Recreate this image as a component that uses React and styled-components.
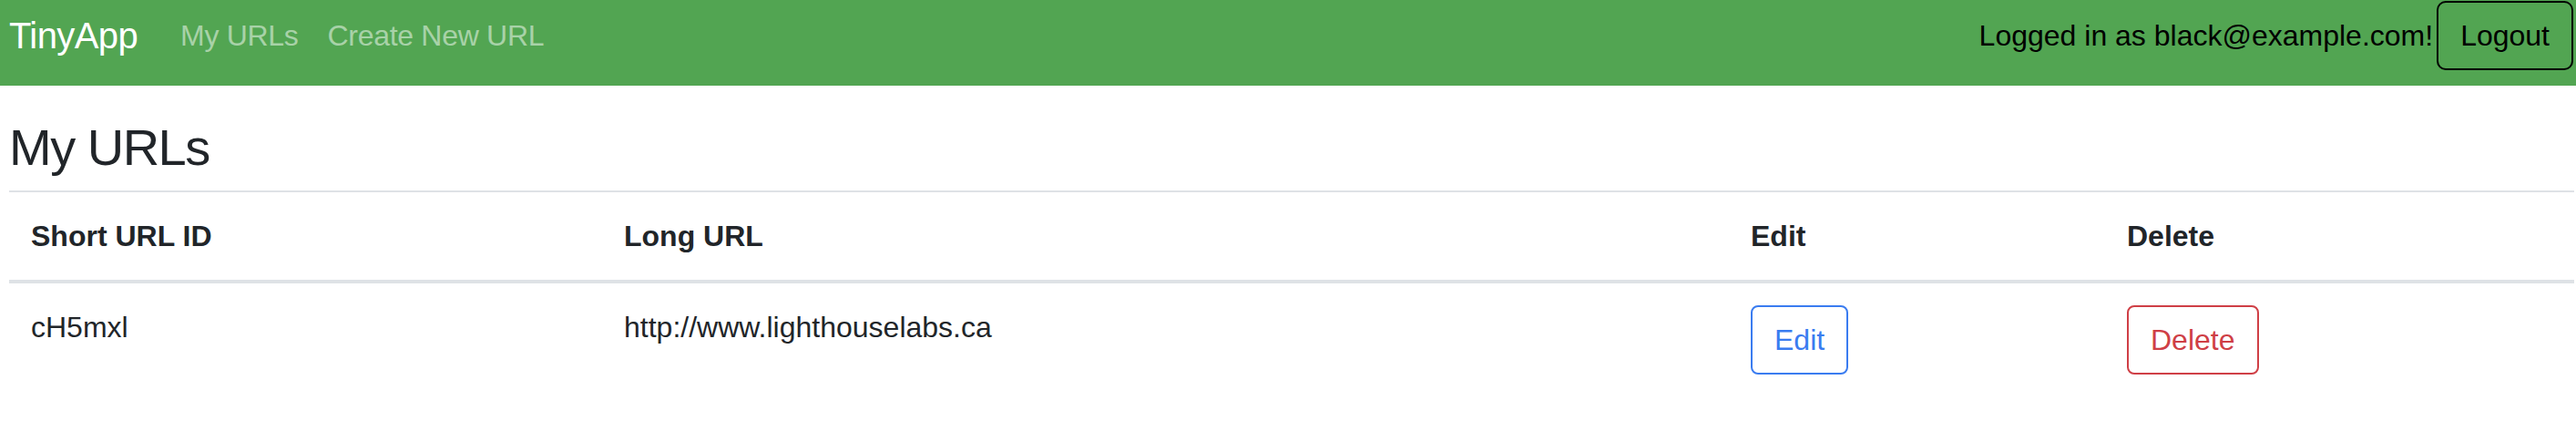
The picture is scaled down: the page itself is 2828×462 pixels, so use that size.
import React from "react"
import styled, { createGlobalStyle } from "styled-components"

const GlobalStyle = createGlobalStyle`
  html, body {
    margin: 0;
    padding: 0;
    background: #fff;
  }
  body {
    font-family: "Liberation Sans", Arial, sans-serif;
    font-size: 32px;
    line-height: 1.5;
    color: #212529;
  }
  * { box-sizing: border-box; }
`

const Navbar = styled.nav`
  display: flex;
  align-items: flex-start;
  height: 94px;
  padding: 0 3px 0 10px;
  background-color: #52a552;
`

const Brand = styled.a`
  margin-top: 9px;
  margin-right: 31px;
  font-size: 40px;
  line-height: 60px;
  letter-spacing: -0.6px;
  color: #fff;
  text-decoration: none;
  white-space: nowrap;
`

const NavLink = styled.a`
  margin-top: 15px;
  padding: 0 16px;
  font-size: 32px;
  line-height: 48px;
  letter-spacing: -0.3px;
  color: rgba(255, 255, 255, 0.5);
  text-decoration: none;
  white-space: nowrap;
`

const UserArea = styled.div`
  display: flex;
  align-items: flex-start;
  margin-left: auto;
`

const LoggedIn = styled.span`
  margin-top: 15px;
  margin-right: 4px;
  line-height: 48px;
  color: #000;
  white-space: nowrap;
`

const OutlineButton = styled.button`
  display: inline-block;
  padding: 12px 24px;
  font-family: inherit;
  font-size: 32px;
  line-height: 48px;
  color: ${(p) => p.$color};
  background: transparent;
  border: 2px solid ${(p) => p.$color};
  border-radius: ${(p) => (p.$round ? "10px" : "8px")};
  cursor: pointer;
`

const LogoutButton = styled(OutlineButton)`
  margin-top: 1px;
`

const Main = styled.main`
  padding: 34px 2px 0 10px;
`

const Title = styled.h3`
  margin: 0 0 14px;
  font-size: 56px;
  font-weight: 500;
  line-height: 1.2;
  letter-spacing: -1.5px;
  color: #212529;
`

const Table = styled.table`
  width: 100%;
  border-collapse: collapse;
  table-layout: fixed;
  color: #212529;
`

const HeadCell = styled.th`
  width: ${(p) => p.$width}px;
  padding: 24px;
  text-align: left;
  vertical-align: bottom;
  font-weight: 700;
  line-height: 48px;
  border-top: 2px solid #dee2e6;
  border-bottom: 4px solid #dee2e6;
`

const Cell = styled.td`
  padding: 24px;
  vertical-align: top;
  line-height: 48px;
`

const urls = [{ id: "cH5mxl", longURL: "http://www.lighthouselabs.ca" }]

const columns = [
  { label: "Short URL ID", width: 651 },
  { label: "Long URL", width: 1237 },
  { label: "Edit", width: 413 },
  { label: "Delete", width: 515 },
]

export default function App() {
  return (
    <>
      <GlobalStyle />
      <Navbar>
        <Brand href="#">TinyApp</Brand>
        <NavLink href="#">My URLs</NavLink>
        <NavLink href="#">Create New URL</NavLink>
        <UserArea>
          <LoggedIn>Logged in as black@example.com!</LoggedIn>
          <LogoutButton $color="#000" $round>Logout</LogoutButton>
        </UserArea>
      </Navbar>
      <Main>
        <Title>My URLs</Title>
        <Table>
          <thead>
            <tr>
              {columns.map((c) => (
                <HeadCell key={c.label} $width={c.width}>{c.label}</HeadCell>
              ))}
            </tr>
          </thead>
          <tbody>
            {urls.map((u) => (
              <tr key={u.id}>
                <Cell>{u.id}</Cell>
                <Cell>{u.longURL}</Cell>
                <Cell>
                  <OutlineButton $color="#3a7cf0">Edit</OutlineButton>
                </Cell>
                <Cell>
                  <OutlineButton $color="#cf3f46">Delete</OutlineButton>
                </Cell>
              </tr>
            ))}
          </tbody>
        </Table>
      </Main>
    </>
  )
}
